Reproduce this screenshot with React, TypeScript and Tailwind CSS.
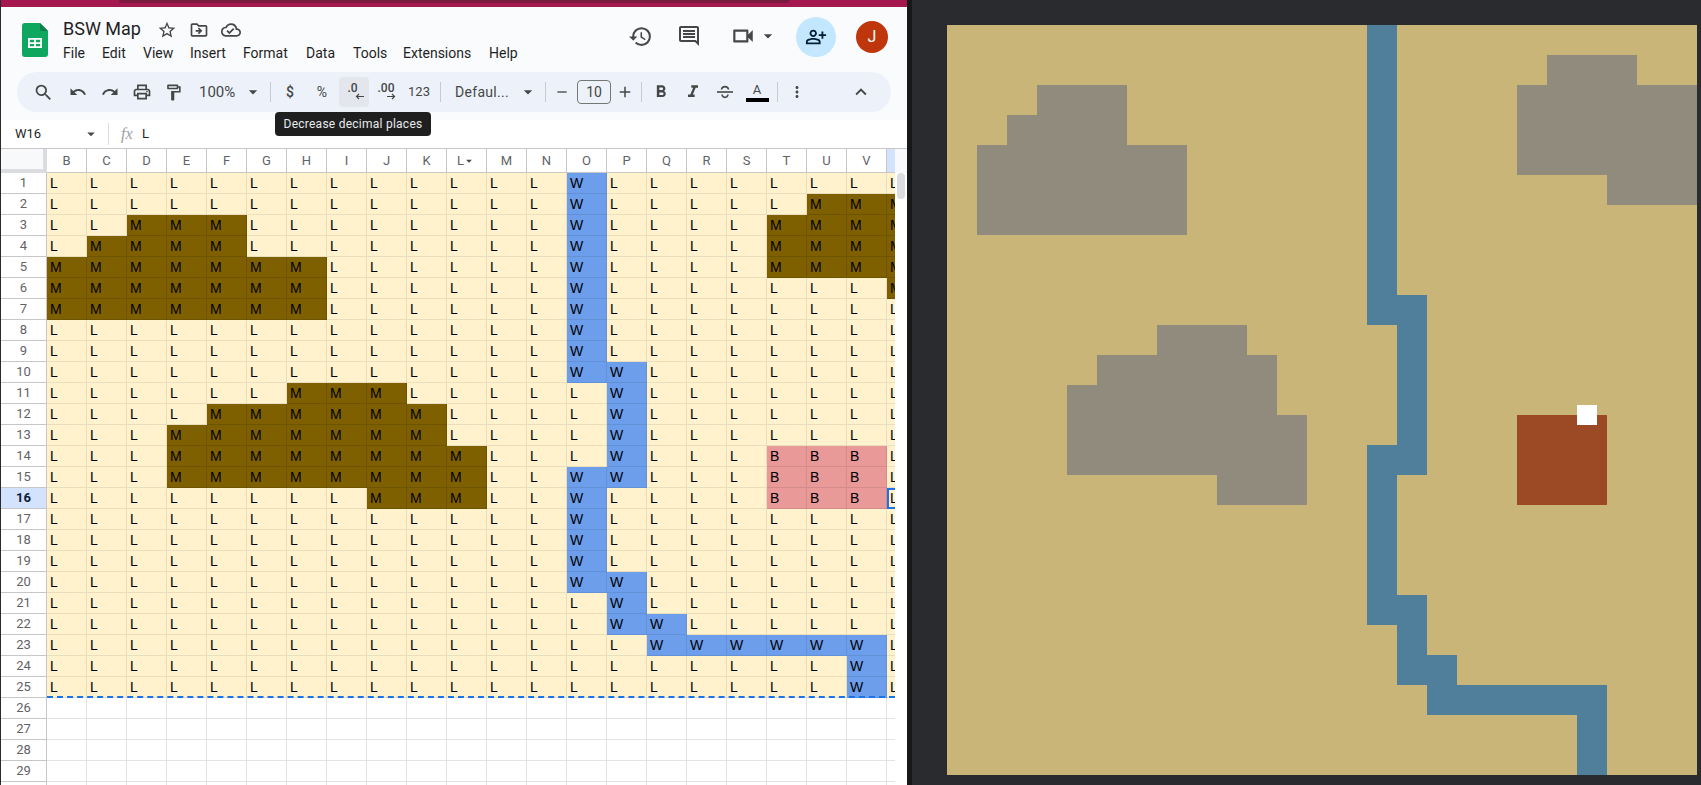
import React from "react";
import {
  MdStarBorder, MdOutlineDriveFileMove, MdOutlineCloudDone, MdHistory, MdOutlineComment, MdOutlineVideocam,
  MdArrowDropDown, MdOutlinePersonAddAlt, MdSearch, MdUndo, MdRedo, MdOutlinePrint, MdOutlineFormatPaint,
  MdAdd, MdRemove, MdFormatBold, MdFormatItalic, MdMoreVert, MdKeyboardArrowUp,
} from "react-icons/md";

const L = "ABCDEFGHIJKLMNOPQRSTUVWXY";
const spans: [number, number, string, string][] = [
  [1, 9, "OO", "W"],
  [10, 10, "OP", "W"], [11, 14, "PP", "W"], [15, 15, "OP", "W"], [16, 19, "OO", "W"], [20, 20, "OP", "W"], [21, 21, "PP", "W"], [22, 22, "PQ", "W"], [23, 23, "QV", "W"], [24, 25, "VV", "W"],
  [2, 2, "UW", "M"], [3, 3, "DF", "M"], [3, 5, "TY", "M"], [4, 4, "CF", "M"], [5, 7, "BH", "M"], [6, 6, "WY", "M"],
  [11, 11, "HJ", "M"], [12, 12, "FK", "M"], [13, 13, "EK", "M"], [14, 15, "EL", "M"], [16, 16, "JL", "M"],
  [14, 16, "TV", "B"],
];
const grid: string[][] = Array.from({ length: 25 }, () => Array.from({ length: 25 }, () => "L"));
spans.forEach(([a, b, c, t]) => {
  for (let r = a; r <= b; r++) for (let i = L.indexOf(c[0]); i <= L.indexOf(c[1]); i++) grid[r - 1][i] = t;
});

const cellCls: Record<string, string> = {
  L: "bg-[#fff2cc] border-[#eadfbd]",
  M: "bg-[#7f6000] border-[#6f5400]",
  W: "bg-[#6d9eeb] border-[#6391d8]",
  B: "bg-[#ea9999] border-[#d48b8b]",
};
const mapCls: Record<string, string> = {
  L: "bg-[#c8b577]",
  M: "bg-[#918b7e]",
  W: "bg-[#507f9c]",
  B: "bg-[#9c4926]",
};

function Sep({ cls }: { cls: string }) {
  return <div className={`h-[20px] w-px bg-[#c7cbd1] shrink-0 ${cls}`} />;
}
function Btn({ w, children, cls = "" }: { w: string; children: React.ReactNode; cls?: string }) {
  return <div className={`h-8 flex items-center justify-center shrink-0 text-[#444746] ${w} ${cls}`}>{children}</div>;
}

const menu: [string, string][] = [["File", "w-[39px]"], ["Edit", "w-[41px]"], ["View", "w-[47px]"], ["Insert", "w-[53px]"], ["Format", "w-[63px]"], ["Data", "w-[47px]"], ["Tools", "w-[50px]"], ["Extensions", "w-[86px]"], ["Help", "w-[40px]"]];

function Logo() {
  return (
    <svg width="26" height="34" viewBox="0 0 26 34" className="shrink-0">
      <path d="M3 0h15l8 8v23a3 3 0 0 1-3 3H3a3 3 0 0 1-3-3V3a3 3 0 0 1 3-3z" fill="#0fa660" />
      <path d="M18 0l8 8h-6a2 2 0 0 1-2-2z" fill="#0b8048" />
      <path d="M6 15h14v10H6z M7.8 16.8v2.4h4.3v-2.4z M13.9 16.8v2.4h4.3v-2.4z M7.8 21v2.2h4.3V21z M13.9 21v2.2h4.3V21z" fill="#fff" fillRule="evenodd" />
    </svg>
  );
}

export default function App() {
  return (
    <div className="w-[1701px] h-[785px] flex overflow-hidden bg-[#2a2b2f] font-['Roboto',sans-serif]">
      <div className="relative w-[907px] h-full shrink-0 flex flex-col bg-white border-l border-[#2a2a2a] overflow-hidden">
        <div className="relative h-[7px] shrink-0 bg-[#a5174f]">
          <div className="absolute left-[118px] top-0 w-[670px] h-[3px] bg-[#7a1a3e] rounded-b" />
        </div>

        <div className="h-[113px] shrink-0 bg-[#f9fbfd] flex flex-col">
          <div className="h-[65px] flex">
            <div className="pl-[21px] pt-[16px] w-[62px] shrink-0"><Logo /></div>
            <div className="flex flex-col flex-1 pt-[11px]">
              <div className="h-[24px] flex items-center">
                <span className="text-[18px] leading-none text-[#1f1f1f] w-[88px] mt-[-3px]">BSW Map</span>
                <div className="w-[32px] flex justify-center text-[#444746]"><MdStarBorder size={20} /></div>
                <div className="w-[32px] flex justify-center text-[#444746]"><MdOutlineDriveFileMove size={20} /></div>
                <div className="w-[32px] flex justify-center text-[#444746]"><MdOutlineCloudDone size={20} /></div>
              </div>
              <div className="h-[22px] flex items-center text-[14px] text-[#1f1f1f]">
                {menu.map(([m, w]) => <span key={m} className={w}>{m}</span>)}
              </div>
            </div>
            <div className="flex items-start pt-[9px] pr-[19px] shrink-0">
              <div className="h-10 w-[40px] flex items-center justify-center text-[#444746]"><MdHistory size={25} /></div>
              <div className="h-10 w-[40px] ml-[9px] flex items-center justify-center text-[#444746]"><MdOutlineComment size={24} /></div>
              <div className="h-10 ml-[21px] flex items-center text-[#444746]"><MdOutlineVideocam size={26} /><MdArrowDropDown size={20} className="ml-[2px]" /></div>
              <div className="h-10 w-10 ml-[18px] mt-px rounded-full bg-[#c2e7ff] flex items-center justify-center text-[#001d35]"><MdOutlinePersonAddAlt size={22} /></div>
              <div className="h-8 w-8 ml-[20px] mt-[5px] rounded-full bg-[#c0360c] flex items-center justify-center text-white text-[16px]">J</div>
            </div>
          </div>

          <div className="ml-[16px] w-[874px] h-10 rounded-full bg-[#edf2fa] flex items-center pl-[10px]">
            <Btn w="w-8"><MdSearch size={21} /></Btn>
            <Btn w="w-8" cls="ml-[3px]"><MdUndo size={18} /></Btn>
            <Btn w="w-8"><MdRedo size={18} /></Btn>
            <Btn w="w-8"><MdOutlinePrint size={20} /></Btn>
            <Btn w="w-[31px]"><MdOutlineFormatPaint size={19} /></Btn>
            <div className="w-[81px] h-8 flex items-center pl-[10px] text-[15px] text-[#444746] shrink-0">
              <span className="w-[41px]">100%</span><MdArrowDropDown size={20} className="ml-[3px]" />
            </div>
            <Sep cls="" />
            <Btn w="w-8" cls="ml-[3px] text-[14px] font-medium">$</Btn>
            <Btn w="w-8" cls="text-[14px]">%</Btn>
            <Btn w="w-[30px]" cls="ml-px h-[30px] rounded-[4px] bg-[#e3e7ed] flex-col">
              <span className="text-[12px] leading-[12px] font-medium mt-[-2px] mr-[3px]">.0</span>
              <svg width="9" height="7" viewBox="0 0 9 7" className="ml-[10px] mt-[-1px]"><path d="M9 3.5H1.5M4 1L1.5 3.5 4 6" stroke="#444746" strokeWidth="1.2" fill="none" /></svg>
            </Btn>
            <Btn w="w-8" cls="ml-px flex-col">
              <span className="text-[12px] leading-[12px] font-medium mt-[-2px]">.00</span>
              <svg width="9" height="7" viewBox="0 0 9 7" className="ml-[10px] mt-[-1px]"><path d="M0 3.5h7.5M5 1l2.5 2.5L5 6" stroke="#444746" strokeWidth="1.2" fill="none" /></svg>
            </Btn>
            <Btn w="w-8" cls="ml-px text-[13px]">123</Btn>
            <Sep cls="ml-[5px]" />
            <div className="w-[104px] h-8 flex items-center pl-[14px] text-[14px] text-[#444746] shrink-0">
              <span className="w-[56px] tracking-[0.3px]">Defaul...</span><MdArrowDropDown size={20} className="ml-[7px]" />
            </div>
            <Sep cls="" />
            <Btn w="w-[31px]"><MdRemove size={16} /></Btn>
            <div className="w-[34px] h-[24px] rounded-[4px] border border-[#747775] flex items-center justify-center text-[14px] text-[#444746] shrink-0">10</div>
            <Btn w="w-[28px]"><MdAdd size={18} /></Btn>
            <Sep cls="ml-[2px]" />
            <Btn w="w-8" cls="ml-[3px]"><MdFormatBold size={20} /></Btn>
            <Btn w="w-8"><MdFormatItalic size={20} /></Btn>
            <Btn w="w-8">
              <svg width="18" height="18" viewBox="0 0 18 18" fill="none" stroke="#444746" strokeWidth="1.6">
                <path d="M1 9h16" />
                <path d="M5.5 6.5C5.8 4.5 7.2 3.6 9 3.6s3.2.9 3.5 2.9" />
                <path d="M6 11.5c.3 1.9 1.5 2.9 3 2.9s2.7-1 3-2.9" />
              </svg>
            </Btn>
            <Btn w="w-8" cls="flex-col">
              <span className="text-[13px] leading-[13px] mt-0">A</span>
              <div className="w-[23px] h-[4px] bg-black mt-[2px]" />
            </Btn>
            <Sep cls="ml-[4px]" />
            <Btn w="w-8" cls="ml-[3px]"><MdMoreVert size={18} /></Btn>
            <Btn w="w-8" cls="ml-[32px]"><MdKeyboardArrowUp size={22} /></Btn>
          </div>
        </div>

        <div className="h-[28px] shrink-0 bg-white flex items-center">
          <span className="pl-[14px] w-[81px] text-[13px] text-[#1f1f1f]">W16</span>
          <MdArrowDropDown size={18} className="text-[#444746]" />
          <div className="w-px h-[22px] bg-[#dadce0] ml-[8px]" />
          <span className="ml-[12px] w-[21px] font-['Liberation_Serif',serif] italic text-[16px] text-[#9aa0a6]">fx</span>
          <span className="text-[13px] text-[#1f1f1f]">L</span>
        </div>

        <div className="flex h-[25px] shrink-0 border-t border-[#c7c7c7]">
          <div className="w-[46px] shrink-0 bg-[#f8f9fa] border-r-[4px] border-b-[4px] border-[#dadce0]" />
          <div className="flex w-[848px] overflow-hidden shrink-0 border-b border-[#c7c7c7]">
            {L.slice(1, 23).split("").map((c) => (
              <div key={c} className={`w-10 shrink-0 flex items-center justify-center border-r border-[#c7c7c7] text-[13px] text-[#5f6368] ${c === "W" ? "bg-[#d3e3fd]" : "bg-white"}`}>
                {c === "W" ? "" : c}{c === "L" && <MdArrowDropDown size={14} className="ml-[-2px] text-[#444746]" />}
              </div>
            ))}
          </div>
          <div className="flex-1 bg-[#f8f9fa]" />
        </div>

        <div className="flex flex-1 min-h-0">
          <div className="w-[894px] shrink-0">
            {Array.from({ length: 30 }, (_, r) => (
              <div key={r} className="flex h-[21px] relative">
                <div className={`w-[46px] shrink-0 flex items-center justify-center border-r border-b border-[#c7c7c7] text-[13px] ${r === 15 ? "bg-[#d3e3fd] text-[#0b1d3a] font-bold" : "bg-white text-[#5f6368]"}`}>{r + 1}</div>
                <div className="flex flex-1 overflow-hidden relative">
                  {Array.from({ length: 22 }, (_, c) => {
                    const v = r < 25 ? grid[r][c + 1] : "";
                    return (
                      <div key={c} className={`w-10 h-[21px] shrink-0 border-r border-b pl-[3px] font-['Liberation_Sans',sans-serif] text-[14px] leading-[21px] text-black ${v ? cellCls[v] : "bg-white border-[#e2e3e3]"}`}>{v}</div>
                    );
                  })}
                  {r === 15 && <div className="absolute left-[840px] top-0 w-[10px] h-[21px] border-2 border-[#1a73e8]" />}
                  {r === 24 && <div className="absolute left-0 right-0 bottom-0 border-b-2 border-dashed border-[#1a73e8]" />}
                </div>
              </div>
            ))}
          </div>
          <div className="flex-1 bg-white">
            <div className="mx-[2px] h-[26px] bg-[#dadce0] rounded-full" />
          </div>
        </div>

        <div className="absolute left-[274px] top-[112px] w-[156px] h-[24px] rounded-[4px] bg-[#1f1f1f] text-[#e8eaed] text-[12px] tracking-[0.25px] flex items-center justify-center">Decrease decimal places</div>
      </div>

      <div className="flex-1 h-full flex border-l-[5px] border-[#17181a] pl-[35px] pt-[25px]">
        <div className="grid grid-cols-[repeat(25,30px)] grid-rows-[repeat(25,30px)] w-[750px] h-[750px] shrink-0 relative">
          {grid.flat().map((v, i) => <div key={i} className={mapCls[v]} />)}
          <div className="absolute left-[630px] top-[380px] w-5 h-5 bg-white" />
        </div>
      </div>
    </div>
  );
}
